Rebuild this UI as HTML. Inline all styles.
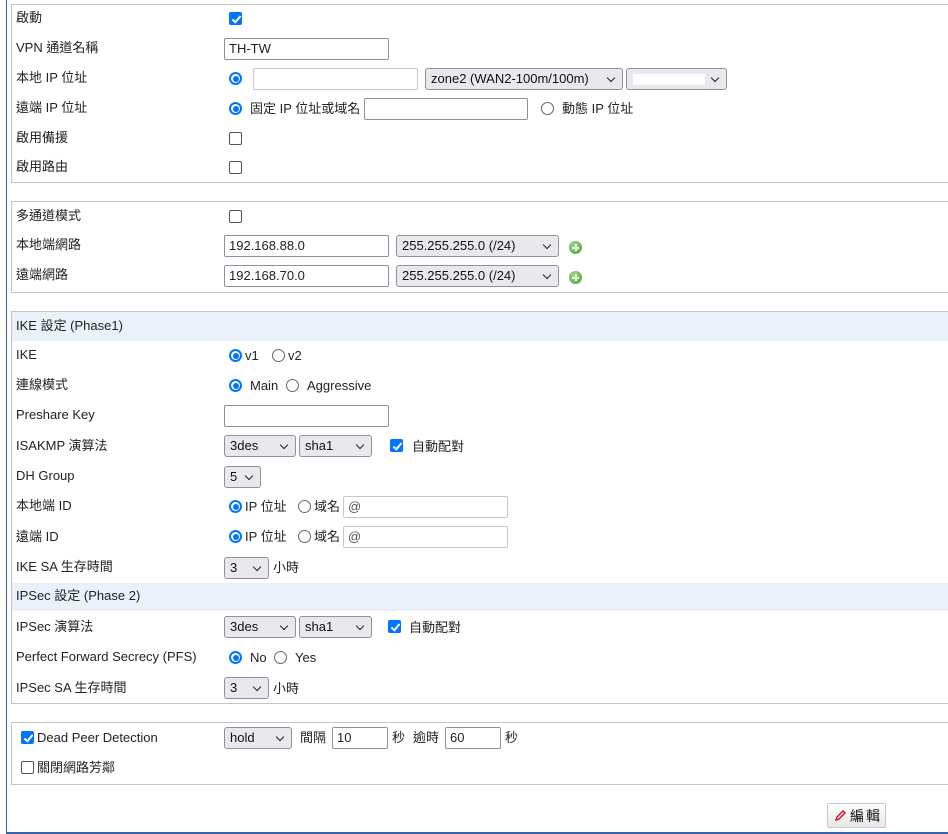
<!DOCTYPE html>
<html><head><meta charset="utf-8">
<style>
*{box-sizing:border-box;margin:0;padding:0}
body{width:948px;height:834px;background:#fff;position:relative;overflow:hidden;font-family:"Liberation Sans","Noto Sans CJK TC",sans-serif;font-size:13px;color:#222}
.a{position:absolute}
.t{position:absolute;line-height:16px;white-space:nowrap}
.box{position:absolute;left:11px;width:960px;border:1px solid #c4c4c4;background:#fff}
.hd{position:absolute;left:12px;width:940px;background:#eaf1fb}
.inp{position:absolute;height:22px;border:1px solid #8f8f9d;border-radius:2px;background:#fff;padding-left:4px;line-height:20px;font-size:13px}
.inp.l{border-color:#c8c8c8}
.sel{position:absolute;height:22px;border:1px solid #8f8f9d;border-radius:3px;background:#e9e9ed;padding-left:5px;line-height:20px;font-size:13px;color:#111}
.sel:after{content:"";position:absolute;right:8px;top:6px;width:5px;height:5px;border-right:1.5px solid #222;border-bottom:1.5px solid #222;transform:rotate(45deg)}
.cb{position:absolute;width:13px;height:13px;border:1px solid #555;border-radius:2px;background:#fff}
.cb.on{background:#0075ff;border-color:#0075ff}
.cb.on:after{content:"";position:absolute;left:3.5px;top:0.5px;width:3px;height:7px;border-right:2px solid #fff;border-bottom:2px solid #fff;transform:rotate(40deg)}
.rd{position:absolute;width:13px;height:13px;border:1px solid #666;border-radius:50%;background:#fff}
.rd.on{border:2px solid #0075ff}
.rd.on:after{content:"";position:absolute;left:1.5px;top:1.5px;width:6px;height:6px;border-radius:50%;background:#0075ff}
.plus{position:absolute;width:13px;height:13px;border-radius:50%;background:radial-gradient(circle at 40% 35%,#9be07f,#3e9e2c);}
.plus:before{content:"";position:absolute;left:3px;top:5.5px;width:7px;height:2px;background:#fff}
.plus:after{content:"";position:absolute;left:5.5px;top:3px;width:2px;height:7px;background:#fff}
</style></head><body>
<div class="a" style="left:6px;top:0;width:1px;height:834px;background:#3a64a8"></div>
<div class="a" style="left:6px;top:832px;width:942px;height:2px;background:#3a64a8"></div>

<div class="box" style="top:4px;height:179px"></div>
<div class="box" style="top:201px;height:92px"></div>
<div class="box" style="top:311px;height:393px"></div>
<div class="hd" style="top:312px;height:29px"></div>
<div class="hd" style="top:583px;height:28px"></div>
<div class="box" style="top:722px;height:63px"></div>

<!-- box1 -->
<div class="t" style="left:16px;top:10px">啟動</div>
<div class="cb on" style="left:229px;top:12px"></div>
<div class="t" style="left:16px;top:40px">VPN 通道名稱</div>
<div class="inp" style="left:224px;top:38px;width:165px">TH-TW</div>
<div class="t" style="left:16px;top:70px">本地 IP 位址</div>
<div class="rd on" style="left:229px;top:72px"></div>
<div class="inp l" style="left:253px;top:68px;width:165px"></div>
<div class="sel" style="left:425px;top:68px;width:198px">zone2 (WAN2-100m/100m)</div>
<div class="sel" style="left:626px;top:68px;width:101px"><span class="a" style="left:6px;top:5px;width:72px;height:11px;background:#fff"></span></div>
<div class="t" style="left:16px;top:100px">遠端 IP 位址</div>
<div class="rd on" style="left:229px;top:102px"></div>
<div class="t" style="left:250px;top:101px">固定 IP 位址或域名</div>
<div class="inp" style="left:364px;top:98px;width:164px"></div>
<div class="rd" style="left:541px;top:102px"></div>
<div class="t" style="left:562px;top:101px">動態 IP 位址</div>
<div class="t" style="left:16px;top:130px">啟用備援</div>
<div class="cb" style="left:229px;top:132px"></div>
<div class="t" style="left:16px;top:159px">啟用路由</div>
<div class="cb" style="left:229px;top:161px"></div>

<!-- box2 -->
<div class="t" style="left:16px;top:208px">多通道模式</div>
<div class="cb" style="left:229px;top:210px"></div>
<div class="t" style="left:16px;top:237px">本地端網路</div>
<div class="inp" style="left:224px;top:235px;width:165px">192.168.88.0</div>
<div class="sel" style="left:396px;top:235px;width:163px">255.255.255.0 (/24)</div>
<div class="plus" style="left:569px;top:241px"></div>
<div class="t" style="left:16px;top:267px">遠端網路</div>
<div class="inp" style="left:224px;top:265px;width:165px">192.168.70.0</div>
<div class="sel" style="left:396px;top:265px;width:163px">255.255.255.0 (/24)</div>
<div class="plus" style="left:569px;top:271px"></div>

<!-- box3 -->
<div class="t" style="left:16px;top:318px">IKE 設定 (Phase1)</div>
<div class="t" style="left:16px;top:347px">IKE</div>
<div class="rd on" style="left:229px;top:349px"></div>
<div class="t" style="left:245px;top:348px">v1</div>
<div class="rd" style="left:272px;top:349px"></div>
<div class="t" style="left:288px;top:348px">v2</div>
<div class="t" style="left:16px;top:377px">連線模式</div>
<div class="rd on" style="left:229px;top:379px"></div>
<div class="t" style="left:250px;top:378px">Main</div>
<div class="rd" style="left:286px;top:379px"></div>
<div class="t" style="left:307px;top:378px">Aggressive</div>
<div class="t" style="left:16px;top:407px">Preshare Key</div>
<div class="inp" style="left:224px;top:405px;width:165px"></div>
<div class="t" style="left:16px;top:438px">ISAKMP 演算法</div>
<div class="sel" style="left:224px;top:435px;width:72px">3des</div>
<div class="sel" style="left:299px;top:435px;width:73px">sha1</div>
<div class="cb on" style="left:390px;top:439px"></div>
<div class="t" style="left:412px;top:439px">自動配對</div>
<div class="t" style="left:16px;top:468px">DH Group</div>
<div class="sel" style="left:224px;top:466px;width:37px">5</div>
<div class="t" style="left:16px;top:498px">本地端 ID</div>
<div class="rd on" style="left:229px;top:500px"></div>
<div class="t" style="left:245px;top:499px">IP 位址</div>
<div class="rd" style="left:298px;top:500px"></div>
<div class="t" style="left:314px;top:499px">域名</div>
<div class="inp l" style="left:343px;top:496px;width:165px;color:#555">@</div>
<div class="t" style="left:16px;top:529px">遠端 ID</div>
<div class="rd on" style="left:229px;top:530px"></div>
<div class="t" style="left:245px;top:529px">IP 位址</div>
<div class="rd" style="left:298px;top:530px"></div>
<div class="t" style="left:314px;top:529px">域名</div>
<div class="inp l" style="left:343px;top:526px;width:165px;color:#555">@</div>
<div class="t" style="left:16px;top:559px">IKE SA 生存時間</div>
<div class="sel" style="left:224px;top:557px;width:45px">3</div>
<div class="t" style="left:273px;top:560px">小時</div>
<div class="t" style="left:16px;top:588px">IPSec 設定 (Phase 2)</div>
<div class="t" style="left:16px;top:619px">IPSec 演算法</div>
<div class="sel" style="left:224px;top:616px;width:72px">3des</div>
<div class="sel" style="left:299px;top:616px;width:73px">sha1</div>
<div class="cb on" style="left:388px;top:620px"></div>
<div class="t" style="left:409px;top:620px">自動配對</div>
<div class="t" style="left:16px;top:649px">Perfect Forward Secrecy (PFS)</div>
<div class="rd on" style="left:229px;top:651px"></div>
<div class="t" style="left:250px;top:650px">No</div>
<div class="rd" style="left:274px;top:651px"></div>
<div class="t" style="left:295px;top:650px">Yes</div>
<div class="t" style="left:16px;top:680px">IPSec SA 生存時間</div>
<div class="sel" style="left:224px;top:677px;width:45px">3</div>
<div class="t" style="left:273px;top:681px">小時</div>

<!-- box4 -->
<div class="cb on" style="left:21px;top:731px"></div>
<div class="t" style="left:37px;top:730px">Dead Peer Detection</div>
<div class="sel" style="left:224px;top:727px;width:68px">hold</div>
<div class="t" style="left:300px;top:730px">間隔</div>
<div class="inp" style="left:332px;top:727px;width:56px">10</div>
<div class="t" style="left:392px;top:730px">秒</div>
<div class="t" style="left:413px;top:730px">逾時</div>
<div class="inp" style="left:445px;top:727px;width:56px">60</div>
<div class="t" style="left:505px;top:730px">秒</div>
<div class="cb" style="left:21px;top:761px"></div>
<div class="t" style="left:37px;top:760px">關閉網路芳鄰</div>

<!-- button -->
<div class="a" style="left:827px;top:803px;width:59px;height:25px;border:1px solid #c8c8c8;background:linear-gradient(#fff,#e8e8e8);border-radius:2px"></div>
<svg class="a" style="left:834px;top:809px" width="13" height="13" viewBox="0 0 13 13"><path d="M2 11 L3 8 L9 2 L11 4 L5 10 Z" fill="none" stroke="#c8102e" stroke-width="1.4"/><path d="M2 11 L4 10.5" stroke="#c8102e" stroke-width="1.4"/></svg>
<div class="t" style="left:850px;top:808px;font-size:14px;letter-spacing:2px;color:#111">編輯</div>
</body></html>
